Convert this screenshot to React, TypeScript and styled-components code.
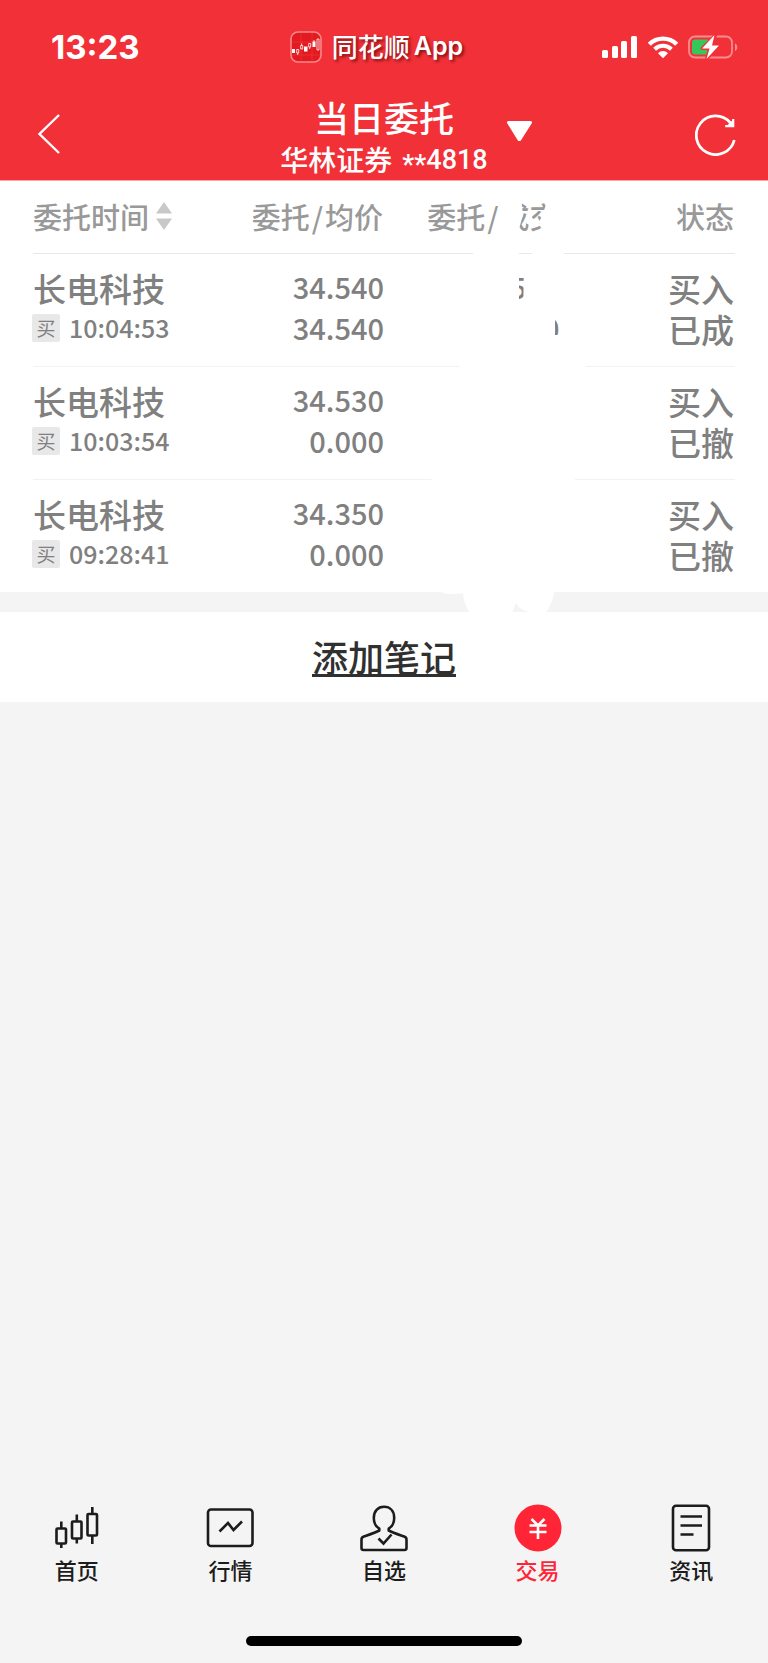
import React from 'react';
import styled, { createGlobalStyle } from 'styled-components';

const GlobalStyle = createGlobalStyle`
  *, *::before, *::after { box-sizing: border-box; }
  body {
    margin: 0;
    background: #f4f4f4;
    font-family: "Noto Sans CJK SC", "Noto Sans", sans-serif;
  }
  button {
    margin: 0;
    padding: 0;
    border: 0;
    background: none;
    color: inherit;
    font: inherit;
    cursor: pointer;
  }
  svg { display: block; }
`;

const Screen = styled.div`
  min-height: 100vh;
  display: flex;
  flex-direction: column;
`;

const Header = styled.header`
  background: #f23038;
  color: #fff;
  border-bottom: 1px solid #f9a5a9;
`;

const StatusBar = styled.div`
  height: 94px;
  display: grid;
  grid-template-columns: 1fr auto 1fr;
  align-items: center;
`;

const Clock = styled.time`
  padding-left: 51px;
  font: 700 33px/32px Inter, sans-serif;
`;

const AppLabel = styled.div`
  display: flex;
  align-items: center;
  gap: 10px;
  padding-right: 15px;
  font-size: 26px;
  line-height: 32px;
  font-weight: 500;
  text-shadow: 2px 2px 3px rgba(70, 0, 0, 0.65);
`;

const AppName = styled.span`
  display: flex;
  gap: 4px;
  padding-bottom: 3px;
`;

const Latin = styled.span`
  font-family: Inter, sans-serif;
  font-size: 25px;
  font-weight: 600;
`;

const Indicators = styled.div`
  display: flex;
  justify-content: flex-end;
  align-items: center;
  gap: 9px;
  padding-right: 30px;
`;

const NavBar = styled.nav`
  height: 86px;
  display: grid;
  grid-template-columns: 1fr auto 1fr;
  align-items: center;
`;

const BackButton = styled.button`
  justify-self: start;
  padding: 0 36px 6px 36px;
`;

const Account = styled.div`
  padding-bottom: 2px;
  text-align: center;
`;

const Title = styled.h1`
  margin: 0 0 2px;
  font-size: 35px;
  line-height: 44px;
  font-weight: 500;
`;

const Subtitle = styled.div`
  display: flex;
  justify-content: center;
  gap: 10px;
  height: 36px;
  font-size: 28px;
  line-height: 36px;
  font-weight: 500;
`;

const AccountNumber = styled.span`
  display: flex;
  font-family: Roboto, sans-serif;
  font-size: 27px;
  line-height: 38px;
`;

const Masked = styled.span`
  padding-top: 5px;
`;

const NavActions = styled.div`
  display: flex;
  align-items: center;
  justify-content: space-between;
  padding: 0 31px 4px 19px;
`;

const CaretButton = styled.button`
  padding-bottom: 8px;
`;

const Panel = styled.section`
  background: #fff;
  padding: 0 33px;
`;

const OrderTable = styled.table`
  width: 100%;
  table-layout: fixed;
  border-collapse: collapse;
  color: #808080;
`;

const HeadCell = styled.th<{ $start?: boolean }>`
  position: relative;
  height: 72px;
  padding: ${(p) => (p.$start ? '0 0 2px' : '0 1px 2px 0')};
  border-bottom: 1px solid #e8e8e8;
  color: #999;
  font-size: 29px;
  line-height: 40px;
  font-weight: 500;
  text-align: ${(p) => (p.$start ? 'left' : 'right')};
  white-space: nowrap;
`;

const Slash = styled.span`
  margin: 0 2px;
`;

const SortButton = styled.button`
  display: flex;
  align-items: center;
  gap: 7px;
`;

const Row = styled.tr`
  & + & { border-top: 1px solid #f2f2f2; }
`;

const Cell = styled.td`
  height: 113px;
  padding: 0 1px 1px 0;
  font-weight: 500;
  text-align: right;
  white-space: nowrap;
`;

const NameCell = styled(Cell)`
  padding: 0 0 4px;
  text-align: left;
`;

const FigureCell = styled(Cell)`
  padding: 0 0 5px;
`;

const Line = styled.div<{ $size: number }>`
  font-size: ${(p) => p.$size}px;
  line-height: 41px;
`;

const TimeLine = styled.div`
  display: flex;
  align-items: center;
  gap: 9px;
  height: 38px;
  margin-left: -1px;
  font-size: 25px;
  line-height: 36px;
`;

const TimeText = styled.time`
  height: 38px;
`;

const SideTag = styled.span`
  width: 28px;
  height: 28px;
  border-radius: 2px;
  background: #e8e8e8;
  font-size: 19px;
  line-height: 28px;
  font-weight: 400;
  text-align: center;
`;

const Smudge = styled.svg`
  position: absolute;
  top: 0;
  right: -40px;
  pointer-events: none;
`;

const NotePanel = styled.section`
  margin-top: 20px;
  height: 90px;
  display: flex;
  align-items: center;
  justify-content: center;
  background: #fff;
`;

const NoteLink = styled.a`
  height: 39px;
  border-bottom: 3px solid #303030;
  color: #303030;
  font-size: 36px;
  line-height: 36px;
  font-weight: 500;
  text-decoration: none;
`;

const TabBar = styled.nav`
  margin-top: auto;
  display: flex;
  padding-bottom: 51px;
`;

const Tab = styled.a<{ $active?: boolean }>`
  flex: 1;
  display: flex;
  flex-direction: column;
  align-items: center;
  gap: 1px;
  color: ${(p) => (p.$active ? '#ff2436' : '#1c1c1c')};
  font-size: 22px;
  line-height: 32px;
  font-weight: 500;
  text-decoration: none;
`;

const HomeIndicator = styled.div`
  width: 36%;
  height: 10px;
  margin: 0 auto 17px;
  border-radius: 5px;
  background: #000;
`;

const AppIcon = () => (
  <svg width="32" height="32" viewBox="0 0 32 32" fill="none">
    <rect x="1" y="1" width="30" height="30" rx="7" fill="#e31a20" stroke="#f9888c" strokeWidth="1.6" />
    <path d="M11 2v28M22 2v28M2 11h28M2 24h28" stroke="#f04348" strokeWidth=".5" />
    <path d="M2 18h3v4H2zM14 15.500h3.500v5H14zM22.500 10.500h3v5.500h-3z" fill="#fff" />
    <path d="M6.700 18.500h2v3.500h-2zM10.700 14.500h2v3.500h-2zM18.700 12.500h2v3.500h-2zM27 8h2v11h-2zM7.700 22v2M11.700 12.500v2M19.700 16v2M24 9v2" stroke="#fff" strokeWidth=".8" />
  </svg>
);

const SignalIcon = () => (
  <svg width="36" height="23" viewBox="0 0 36 23" fill="#fff">
    <rect x="0" y="14" width="6" height="8" rx="1.500" />
    <rect x="10" y="10" width="6" height="12" rx="1.500" />
    <rect x="19" y="5" width="6" height="17" rx="1.500" />
    <rect x="29" y="0" width="6" height="22" rx="1.500" />
  </svg>
);

const WifiIcon = () => (
  <svg width="32" height="23" viewBox="0 0 32 23" fill="none" stroke="#fff">
    <path d="M2.300 8.300a19.300 19.300 0 0 1 27.400 0" strokeWidth="4.400" />
    <path d="M7.600 13.200a12 12 0 0 1 16.800 0" strokeWidth="4" />
    <path d="M16 22.300l-5-5.100a7 7 0 0 1 10 0z" fill="#fff" stroke="none" />
  </svg>
);

const BatteryIcon = () => (
  <svg width="50" height="24" viewBox="0 0 50 24" fill="none">
    <rect x="1" y="1.500" width="43" height="21" rx="6" stroke="#f88d91" strokeWidth="1.800" />
    <path d="M47 8.500c3 .8 3 6.700 0 7.500z" fill="#f88d91" />
    <rect x="4" y="4.500" width="18" height="15" rx="3" fill="#34c759" />
    <path d="M27.500 0L14 13.500h7.500L18.500 24 31 10.500h-7z" fill="#fff" stroke="#f23038" strokeWidth="3" strokeLinejoin="round" />
    <path d="M26.500 0L14 13.500h7.500L18.500 24 31 10.500h-7z" fill="#fff" />
  </svg>
);

const BackIcon = () => (
  <svg width="26" height="42" viewBox="0 0 26 42" fill="none" stroke="#fff" strokeWidth="2.400">
    <path d="M23 2L3.500 21 23 40" />
  </svg>
);

const CaretIcon = () => (
  <svg width="26" height="21" viewBox="0 0 26 21" fill="#fff">
    <path d="M1.500 0h22a1.500 1.500 0 0 1 1.300 2.300L14 19.200a2 2 0 0 1-3.300 0L.2 2.300A1.500 1.500 0 0 1 1.500 0z" />
  </svg>
);

const RefreshIcon = () => (
  <svg width="42" height="42" viewBox="0 0 42 42" fill="none" stroke="#fff" strokeWidth="2.800">
    <path d="M39.300 26A19.300 19.300 0 1 1 35.500 9" />
    <path d="M39 5v7.500h-8z" fill="#fff" stroke="none" />
    <path d="M38.200 5v7.200h-8" strokeWidth="2.200" />
  </svg>
);

const SortIcon = () => (
  <svg width="16" height="28" viewBox="0 0 16 28" fill="#c8c8c8">
    <path d="M8 0l8 11.500H0zM0 16.500h16L8 28z" />
  </svg>
);

const CandlesIcon = () => (
  <svg width="48" height="48" viewBox="0 0 48 48" fill="none" stroke="#1c1c1c" strokeWidth="2.600">
    <rect x="3.500" y="24.500" width="9.500" height="15" rx="1" />
    <rect x="19" y="17.500" width="9.500" height="17" rx="1" />
    <rect x="34.500" y="10" width="9.500" height="21.500" rx="1" />
    <path d="M8.300 17.500v7M8.300 39.500V44M23.800 10.500v7M23.800 34.500v5M39.300 3v7M39.300 31.500V40" />
  </svg>
);

const QuotesIcon = () => (
  <svg width="48" height="48" viewBox="0 0 48 48" fill="none" stroke="#1c1c1c" strokeWidth="2.600">
    <rect x="2" y="5.500" width="44.500" height="36.500" rx="3" />
    <path d="M13.500 27.500l8.500-8.500 5.500 7 8.500-8.500" />
  </svg>
);

const WatchIcon = () => (
  <svg width="48" height="48" viewBox="0 0 48 48" fill="none" stroke="#1c1c1c" strokeWidth="2.600" strokeLinejoin="round">
    <path d="M19.300 26.500v-1.800c-3.300-2-5.500-6-5.500-10.700C13.800 7 17.800 2.800 24 2.800S34.200 7 34.200 14c0 4.700-2.200 8.700-5.500 10.700v1.800c4 2.300 10.500 4.300 15.500 6 1.500.5 2.300 1.500 2.300 3V44a2 2 0 0 1-2 2h-41a2 2 0 0 1-2-2v-8.500c0-1.500.8-2.500 2.300-3 5-1.700 11.500-3.700 15.500-6z" />
    <path d="M18.500 34.500l5 5 8-9" strokeLinejoin="miter" />
  </svg>
);

const TradeIcon = () => (
  <svg width="48" height="48" viewBox="0 0 48 48" fill="none" stroke="#fff" strokeWidth="2.600">
    <circle cx="24" cy="24" r="23.500" fill="#ff2436" stroke="none" />
    <path d="M17.500 15l6.500 6.500L30.500 15M15.500 21.500h17M15.500 28h17M24 21.500V35" />
  </svg>
);

const NewsIcon = () => (
  <svg width="48" height="48" viewBox="0 0 48 48" fill="none" stroke="#1c1c1c" strokeWidth="2.600">
    <rect x="6" y="1.800" width="36" height="44.500" rx="3" />
    <path d="M13.500 12.500h21.500M13.500 21.500h21.500M13.500 30.500h13" />
  </svg>
);

/* White strokes that hide the quantity column of the shared order list. */
const EraserStrokes = () => (
  <Smudge width="200" height="432" viewBox="0 0 200 432" fill="#fff" aria-hidden="true">
    <path d="M100 16H121L123 34 119 48 119 84 119 128H73V60Q74 54 100 52z" />
    <path d="M150 14H164V138H123L124 82H132V66Q134 52 142 48 136 42 142 36 144 28 150 14z" />
    <path d="M128 28L134 31 129 44 126 36z" />
    <path d="M64 84H118V126H155V154H162V84H176L186 180V240L175 298 160 400 154 412Q152 424 145 432L131 431Q120 430 116 422L112 432H70Q64 424 63 412 58 413 46 413L34 408 31 280 61 180z" />
  </Smudge>
);

type Order = { time: string; price: string; average: string; quantity?: string; result: string };

const orders: Order[] = [
  { time: '10:04:53', price: '34.540', average: '34.540', quantity: '500', result: '已成' },
  { time: '10:03:54', price: '34.530', average: '0.000', result: '已撤' },
  { time: '09:28:41', price: '34.350', average: '0.000', result: '已撤' },
];

const tabs = [
  { label: '首页', Icon: CandlesIcon },
  { label: '行情', Icon: QuotesIcon },
  { label: '自选', Icon: WatchIcon },
  { label: '交易', Icon: TradeIcon, active: true },
  { label: '资讯', Icon: NewsIcon },
];

export default function App() {
  return (
    <Screen>
      <GlobalStyle />
      <Header>
        <StatusBar>
          <Clock>13:23</Clock>
          <AppLabel>
            <AppIcon />
            <AppName>同花顺<Latin>App</Latin></AppName>
          </AppLabel>
          <Indicators>
            <SignalIcon />
            <WifiIcon />
            <BatteryIcon />
          </Indicators>
        </StatusBar>
        <NavBar>
          <BackButton aria-label="返回"><BackIcon /></BackButton>
          <Account>
            <Title>当日委托</Title>
            <Subtitle>华林证券<AccountNumber><Masked>**</Masked>4818</AccountNumber></Subtitle>
          </Account>
          <NavActions>
            <CaretButton aria-label="切换账户"><CaretIcon /></CaretButton>
            <button aria-label="刷新"><RefreshIcon /></button>
          </NavActions>
        </NavBar>
      </Header>

      <Panel>
        <OrderTable>
          <thead>
            <tr>
              <HeadCell $start><SortButton>委托时间<SortIcon /></SortButton></HeadCell>
              <HeadCell>委托<Slash>/</Slash>均价</HeadCell>
              <HeadCell>委托<Slash>/</Slash>成交<EraserStrokes /></HeadCell>
              <HeadCell>状态</HeadCell>
            </tr>
          </thead>
          <tbody>
            {orders.map((order) => (
              <Row key={order.time}>
                <NameCell>
                  <Line $size={33}>长电科技</Line>
                  <TimeLine><SideTag>买</SideTag><TimeText>{order.time}</TimeText></TimeLine>
                </NameCell>
                <FigureCell>
                  <Line $size={29}>{order.price}</Line>
                  <Line $size={29}>{order.average}</Line>
                </FigureCell>
                <FigureCell>
                  {order.quantity && <Line $size={29}>{order.quantity}</Line>}
                  {order.quantity && <Line $size={29}>{order.quantity}</Line>}
                </FigureCell>
                <Cell>
                  <Line $size={33}>买入</Line>
                  <Line $size={33}>{order.result}</Line>
                </Cell>
              </Row>
            ))}
          </tbody>
        </OrderTable>
      </Panel>

      <NotePanel>
        <NoteLink href="#note">添加笔记</NoteLink>
      </NotePanel>

      <TabBar>
        {tabs.map(({ label, Icon, active }) => (
          <Tab key={label} href="#" $active={active}>
            <Icon />
            {label}
          </Tab>
        ))}
      </TabBar>
      <HomeIndicator />
    </Screen>
  );
}
